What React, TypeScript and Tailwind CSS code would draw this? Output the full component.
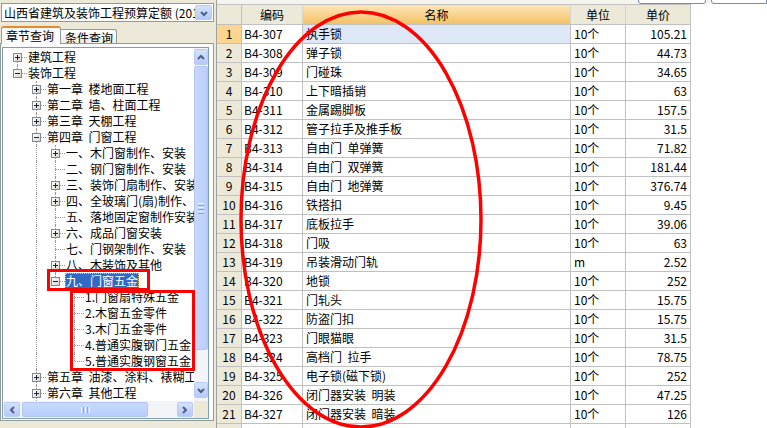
import React from "react"

const font = "font-['Noto_Sans_CJK_SC','Liberation_Sans',sans-serif]"

type Node = {
  text: string
  depth: number
  exp?: "+" | "-"
  guides: boolean[]
  above: boolean
  below: boolean
  selected?: boolean
}

const tree: Node[] = [
  { text: "建筑工程", depth: 0, exp: "+", guides: [], above: false, below: true },
  { text: "装饰工程", depth: 0, exp: "-", guides: [], above: true, below: false },
  { text: "第一章  楼地面工程", depth: 1, exp: "+", guides: [false], above: true, below: true },
  { text: "第二章  墙、柱面工程", depth: 1, exp: "+", guides: [false], above: true, below: true },
  { text: "第三章  天棚工程", depth: 1, exp: "+", guides: [false], above: true, below: true },
  { text: "第四章  门窗工程", depth: 1, exp: "-", guides: [false], above: true, below: true },
  { text: "一、木门窗制作、安装", depth: 2, exp: "+", guides: [false, true], above: true, below: true },
  { text: "二、钢门窗制作、安装", depth: 2, guides: [false, true], above: true, below: true },
  { text: "三、装饰门扇制作、安装", depth: 2, exp: "+", guides: [false, true], above: true, below: true },
  { text: "四、全玻璃门(扇)制作、安装", depth: 2, exp: "+", guides: [false, true], above: true, below: true },
  { text: "五、落地固定窗制作安装", depth: 2, guides: [false, true], above: true, below: true },
  { text: "六、成品门窗安装", depth: 2, exp: "+", guides: [false, true], above: true, below: true },
  { text: "七、门钢架制作、安装", depth: 2, guides: [false, true], above: true, below: true },
  { text: "八、木装饰及其他", depth: 2, exp: "+", guides: [false, true], above: true, below: true },
  { text: "九、门窗五金", depth: 2, exp: "-", guides: [false, true], above: true, below: false, selected: true },
  { text: "1.门窗扇特殊五金", depth: 3, guides: [false, true, false], above: true, below: true },
  { text: "2.木窗五金零件", depth: 3, guides: [false, true, false], above: true, below: true },
  { text: "3.木门五金零件", depth: 3, guides: [false, true, false], above: true, below: true },
  { text: "4.普通实腹钢门五金", depth: 3, guides: [false, true, false], above: true, below: true },
  { text: "5.普通实腹钢窗五金", depth: 3, guides: [false, true, false], above: true, below: false },
  { text: "第五章  油漆、涂料、裱糊工程", depth: 1, exp: "+", guides: [false], above: true, below: true },
  { text: "第六章  其他工程", depth: 1, exp: "+", guides: [false], above: true, below: true },
]

const rows = [
  ["B4-307", "执手锁", "10个", "105.21"],
  ["B4-308", "弹子锁", "10个", "44.73"],
  ["B4-309", "门碰珠", "10个", "34.65"],
  ["B4-310", "上下暗插销", "10个", "63"],
  ["B4-311", "金属踢脚板", "10个", "157.5"],
  ["B4-312", "管子拉手及推手板", "10个", "31.5"],
  ["B4-313", "自由门  单弹簧", "10个", "71.82"],
  ["B4-314", "自由门  双弹簧", "10个", "181.44"],
  ["B4-315", "自由门  地弹簧", "10个", "376.74"],
  ["B4-316", "铁搭扣", "10个", "9.45"],
  ["B4-317", "底板拉手", "10个", "39.06"],
  ["B4-318", "门吸", "10个", "63"],
  ["B4-319", "吊装滑动门轨", "m", "2.52"],
  ["B4-320", "地锁", "10个", "252"],
  ["B4-321", "门轧头", "10个", "15.75"],
  ["B4-322", "防盗门扣", "10个", "15.75"],
  ["B4-323", "门眼猫眼", "10个", "31.5"],
  ["B4-324", "高档门  拉手", "10个", "78.75"],
  ["B4-325", "电子锁(磁下锁)", "10个", "252"],
  ["B4-326", "闭门器安装  明装", "10个", "47.25"],
  ["B4-327", "闭门器安装  暗装", "10个", "126"],
]

// small XP-style scroll arrow
function Arrow({ dir }: { dir: "up" | "down" | "left" | "right" }) {
  const pts = {
    up: "2,7 5,4 8,7",
    down: "2,4 5,7 8,4",
    left: "7,2 4,5 7,8",
    right: "3,2 6,5 3,8",
  }[dir]
  return (
    <svg width="10" height="10" viewBox="0 0 10 10">
      <polyline points={pts} fill="none" stroke="#4d6185" strokeWidth="2" />
    </svg>
  )
}

function ScrollBtn({ dir, className }: { dir: "up" | "down" | "left" | "right"; className: string }) {
  return (
    <div
      className={`flex items-center justify-center rounded-[2px] border border-[#b7cbf5] bg-gradient-to-b from-[#d5e2fd] to-[#b5c9f7] ${className}`}
    >
      <Arrow dir={dir} />
    </div>
  )
}

function Expander({ kind }: { kind: "+" | "-" }) {
  return (
    <div className="absolute left-[5px] top-[4px] w-[9px] h-[9px] border border-[#7b8a9e] bg-gradient-to-br from-white to-[#d8d6cc] flex items-center justify-center">
      <div className="relative w-[5px] h-[5px]">
        <div className="absolute left-0 top-[2px] w-[5px] h-[1px] bg-[#222]" />
        {kind === "+" && <div className="absolute left-[2px] top-0 w-[1px] h-[5px] bg-[#222]" />}
      </div>
    </div>
  )
}

function TreeRow({ n }: { n: Node }) {
  return (
    <div className="flex h-[16px] items-stretch">
      {n.guides.map((g, i) => (
        <div key={i} className="relative w-[19px] shrink-0">
          {g && <div className="absolute left-[9px] top-0 bottom-0 border-l border-dotted border-[#9a9a9a]" />}
        </div>
      ))}
      <div className="relative w-[19px] shrink-0">
        {n.above && <div className="absolute left-[9px] top-0 h-[8px] border-l border-dotted border-[#9a9a9a]" />}
        {n.below && <div className="absolute left-[9px] top-[8px] bottom-0 border-l border-dotted border-[#9a9a9a]" />}
        <div className="absolute left-[10px] right-0 top-[8px] border-t border-dotted border-[#9a9a9a]" />
        {n.exp && <Expander kind={n.exp} />}
      </div>
      <div
        className={`whitespace-pre px-[1px] leading-[16px] text-[12px] ${
          n.selected ? "bg-[#316ac5] text-white outline outline-1 outline-dotted outline-[#f0c060] -outline-offset-1" : "text-black"
        }`}
      >
        {n.text}
      </div>
    </div>
  )
}

function LeftPanel() {
  return (
    <div className="w-[216px] h-full shrink-0 bg-[#ece9d8] flex flex-col">
      {/* combo */}
      <div className="mt-[3px] ml-[1px] w-[213px] h-[19px] border border-[#7f9db9] bg-white flex items-center">
        <div className="flex-1 overflow-hidden whitespace-nowrap pl-[2px] text-[12px] leading-[17px] text-black">
          山西省建筑及装饰工程预算定额 (2011)
        </div>
        <div className="w-[17px] h-[15px] mr-[1px] rounded-[2px] border border-[#b7cbf5] bg-gradient-to-b from-[#d5e2fd] to-[#b3c8f7] flex items-center justify-center">
          <Arrow dir="down" />
        </div>
      </div>

      {/* tabs */}
      <div className="mt-[4px] h-[18px] flex items-end pl-[1px]">
        <div className="relative z-10 w-[60px] h-[18px] border-x border-[#919b9c] bg-[#fcfcfe] border-t-2 border-t-[#e68b2c] rounded-t-[3px] text-[12px] leading-[15px] pl-[4px]">
          章节查询
        </div>
        <div className="w-[56px] h-[15px] border-t border-r border-[#919b9c] rounded-tr-[3px] bg-gradient-to-b from-white to-[#ecebe6] text-[12px] leading-[15px] pl-[4px]">
          条件查询
        </div>
      </div>

      {/* tab page */}
      <div className="-mt-px flex-1 mb-[11px] mr-[2px] border border-[#919b9c] bg-[#fcfcfe] flex flex-col">
        <div className="mt-[3px] ml-[1px] mr-[4px] mb-[1px] flex-1 border border-[#7f9db9] bg-white flex flex-col overflow-hidden">
          <div className="flex flex-1 min-h-0">
            <div className="flex-1 overflow-hidden pt-[1px] pl-[5px]">
              {tree.map((n, i) => (
                <TreeRow key={i} n={n} />
              ))}
            </div>
            <div className="w-[14px] flex flex-col bg-[#f3f4f8] py-[1px]">
              <ScrollBtn dir="up" className="h-[16px]" />
              <div className="mt-[1px] h-[284px] rounded-[2px] border border-[#b2c6f4] bg-gradient-to-r from-[#c9d9fd] to-[#b9cdf9] flex flex-col items-center justify-center gap-[1px]">
                <div className="w-[6px] h-[1px] bg-[#eef3fe]" />
                <div className="w-[6px] h-[1px] bg-[#8ca6e0]" />
                <div className="w-[6px] h-[1px] bg-[#eef3fe]" />
                <div className="w-[6px] h-[1px] bg-[#8ca6e0]" />
                <div className="w-[6px] h-[1px] bg-[#eef3fe]" />
                <div className="w-[6px] h-[1px] bg-[#8ca6e0]" />
              </div>
              <div className="flex-1" />
              <ScrollBtn dir="down" className="h-[16px] mb-[2px]" />
            </div>
          </div>
          <div className="h-[17px] flex">
            <div className="flex-1 flex bg-[#f3f4f8] px-[1px] py-[1px]">
              <ScrollBtn dir="left" className="w-[16px]" />
              <div className="ml-[2px] w-[126px] rounded-[2px] border border-[#b2c6f4] bg-gradient-to-b from-[#c9d9fd] to-[#b9cdf9] flex items-center justify-center gap-[1px]">
                <div className="w-[1px] h-[6px] bg-[#eef3fe]" />
                <div className="w-[1px] h-[6px] bg-[#8ca6e0]" />
                <div className="w-[1px] h-[6px] bg-[#eef3fe]" />
                <div className="w-[1px] h-[6px] bg-[#8ca6e0]" />
                <div className="w-[1px] h-[6px] bg-[#eef3fe]" />
              </div>
              <div className="flex-1" />
              <ScrollBtn dir="right" className="w-[16px]" />
            </div>
            <div className="w-[14px] bg-[#ece9d8]" />
          </div>
        </div>
      </div>
    </div>
  )
}

const cols = "grid grid-cols-[25px_61px_268px_55px_65px]"

function RightPanel() {
  return (
    <div className="flex-1 h-full bg-white border-l border-[#a0a0a0] flex flex-col overflow-hidden">
      {/* toolbar remnants */}
      <div className="h-[4px] shrink-0 bg-[#f5f4ee] flex items-end pl-[421px] gap-[5px] overflow-hidden">
        <div className="w-[73px] h-[14px] rounded-b-[3px] border border-[#7a8ba8] bg-white" />
        <div className="w-[60px] h-[14px] rounded-bl-[3px] border border-[#7a8ba8] bg-white" />
      </div>
      <div className={`${cols} w-[474px] h-[21px] shrink-0 border-y border-[#c0c0c0] text-[12px] leading-[19px] text-black`}>
        <div className="bg-[#ece9d8] border-r border-[#c0c0c0]" />
        <div className="bg-[#ece9d8] border-r border-[#d8d5c6] text-center">编码</div>
        <div className="bg-gradient-to-b from-[#fde6b8] to-[#f3c163] border-r border-[#d8d5c6] text-center">名称</div>
        <div className="bg-[#ece9d8] border-r border-[#d8d5c6] text-center">单位</div>
        <div className="bg-[#ece9d8] border-r border-[#c0c0c0] text-center">单价</div>
      </div>
      {rows.map((r, i) => (
        <div key={i} className={`${cols} w-[474px] h-[19px] shrink-0 border-b border-[#c0c0c0] text-[12px] leading-[18px] text-black`}>
          <div className={`${i === 0 ? "bg-[#fdd490]" : "bg-[#ece9d8]"} border-r border-[#c0c0c0] text-center`}>{i + 1}</div>
          <div className="border-r border-[#c0c0c0] pl-[2px] whitespace-nowrap">{r[0]}</div>
          <div className={`${i === 0 ? "bg-[#dde7f5]" : ""} border-r border-[#c0c0c0] pl-[3px] whitespace-pre`}>{r[1]}</div>
          <div className="border-r border-[#c0c0c0] pl-[3px]">{r[2]}</div>
          <div className="border-r border-[#c0c0c0] pr-[3px] text-right">{r[3]}</div>
        </div>
      ))}
      {/* next row, only its grid lines show */}
      <div className={`${cols} w-[474px] h-[19px] shrink-0 border-b border-[#c0c0c0]`}>
        <div className="bg-[#ece9d8] border-r border-[#c0c0c0]" />
        <div className="border-r border-[#c0c0c0]" />
        <div className="border-r border-[#c0c0c0]" />
        <div className="border-r border-[#c0c0c0]" />
        <div className="border-r border-[#c0c0c0]" />
      </div>
    </div>
  )
}

export default function App() {
  return (
    <div className={`relative w-[767px] h-[428px] overflow-hidden flex bg-white ${font}`}>
      <LeftPanel />
      <RightPanel />

      {/* red annotations drawn over the screenshot */}
      <div className="absolute left-[47px] top-[269px] w-[103px] h-[22px] border-[3px] border-[#ff0000] pointer-events-none" />
      <div className="absolute left-[70px] top-[290px] w-[125px] h-[81px] border-[3px] border-[#ff0000] pointer-events-none" />
      <svg className="absolute left-0 top-0 pointer-events-none" width="767" height="428">
        <ellipse cx="361" cy="219.5" rx="120" ry="207.5" fill="none" stroke="#ff0000" strokeWidth="3.5" />
      </svg>
    </div>
  )
}
